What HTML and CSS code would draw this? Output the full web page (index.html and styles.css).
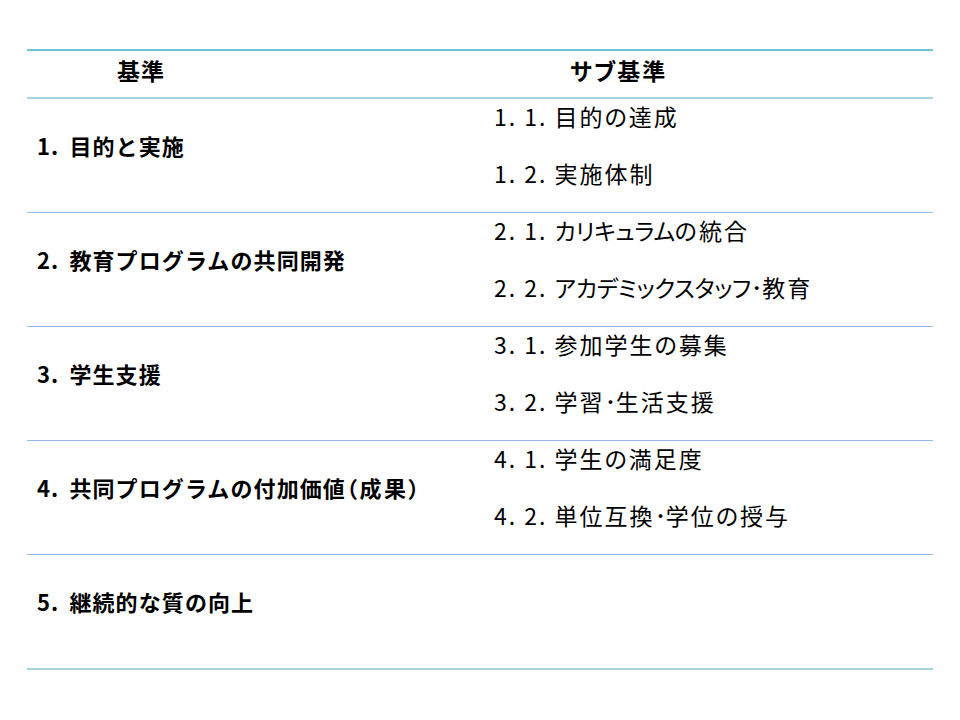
FILE: index.html
```html
<!DOCTYPE html>
<html lang="ja">
<head>
<meta charset="utf-8">
<title>基準とサブ基準</title>
<link rel="stylesheet" href="styles.css">
</head>
<body>
<div class="table">
  <div class="head">
    <div class="h-left">基準</div>
    <div class="h-right">サブ基準</div>
  </div>
  <div class="row">
    <div class="crit">1. 目的と実施</div>
    <div class="subs">
      <div class="sub">1. 1. 目的の達成</div>
      <div class="sub">1. 2. 実施体制</div>
    </div>
  </div>
  <div class="row">
    <div class="crit">2. 教育プログラムの共同開発</div>
    <div class="subs">
      <div class="sub">2. 1. <span class="kana">カリキュラム</span>の統合</div>
      <div class="sub">2. 2. <span class="kana">アカデミックスタッフ･</span>教育</div>
    </div>
  </div>
  <div class="row">
    <div class="crit">3. 学生支援</div>
    <div class="subs">
      <div class="sub">3. 1. 参加学生の募集</div>
      <div class="sub">3. 2. 学習<span class="kana">･</span>生活支援</div>
    </div>
  </div>
  <div class="row">
    <div class="crit">4. 共同プログラムの付加価値<span class="paren">（成果）</span></div>
    <div class="subs">
      <div class="sub">4. 1. 学生の満足度</div>
      <div class="sub">4. 2. 単位互換<span class="kana">･</span>学位の授与</div>
    </div>
  </div>
  <div class="row last">
    <div class="crit">5. 継続的な質の向上</div>
    <div class="subs"></div>
  </div>
</div>
</body>
</html>
```
FILE: styles.css
```css
html, body {
  margin: 0;
  padding: 0;
  background: #ffffff;
}

body {
  font-family: "Noto Sans CJK JP", "Noto Sans", sans-serif;
  color: #000000;
}

.table {
  margin: 49px 0 0 27px;
  width: 906px;
  border-top: 2px solid #6cc4d4;
  border-bottom: 2px solid #a6d4df;
}

.head {
  display: grid;
  grid-template-columns: 457px 449px;
  height: 48px;
  box-sizing: border-box;
  padding-bottom: 8px;
  align-items: center;
  border-bottom: 2px solid #a6d4df;
  font-weight: bold;
  font-size: 23px;
  letter-spacing: 1px;
  line-height: 1;
}

.h-left {
  padding-left: 90px;
}

.h-right {
  padding-left: 86px;
  font-feature-settings: "palt";
  letter-spacing: 2px;
}

.row {
  display: grid;
  grid-template-columns: 457px 449px;
  grid-template-rows: 113px;
  height: 113px;
  border-bottom: 1px solid #95b9e4;
  box-sizing: content-box;
}

.row.last {
  border-bottom: none;
}

.crit {
  display: flex;
  align-items: center;
  box-sizing: border-box;
  padding: 0 0 22px 10px;
  font-weight: bold;
  font-size: 22px;
  letter-spacing: 1.1px;
  word-spacing: 4px;
  line-height: 1;
  white-space: pre;
}

.paren {
  font-feature-settings: "palt";
  letter-spacing: 2.5px;
}

.subs {
  display: flex;
  flex-direction: column;
  justify-content: flex-start;
  gap: 26px;
  box-sizing: border-box;
  padding: 2px 0 0 10px;
}

.sub {
  height: 31px;
  display: flex;
  align-items: center;
  font-size: 23px;
  letter-spacing: 2px;
  font-feature-settings: "palt";
  line-height: 1;
  white-space: pre;
}

.kana {
  letter-spacing: -0.3px;
}
```
